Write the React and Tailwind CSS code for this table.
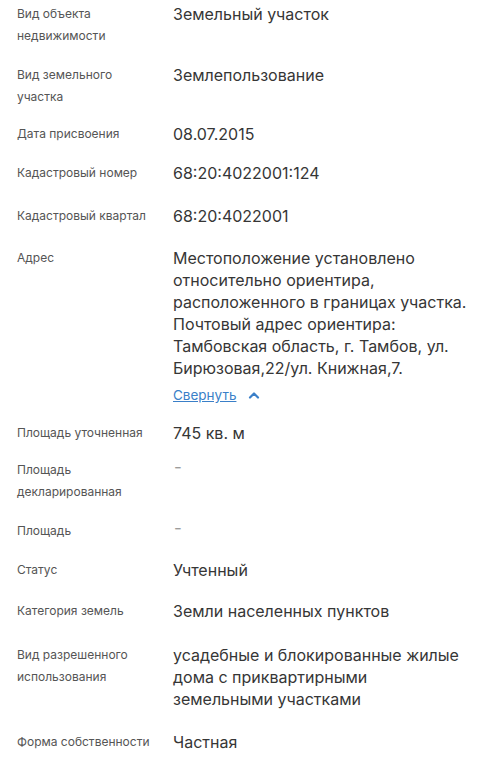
import React from 'react';

const rows = [
  { label: 'Вид объекта недвижимости', value: 'Земельный участок', pb: 'pb-[17px]' },
  { label: 'Вид земельного участка', value: 'Землепользование', pb: 'pb-[15px]' },
  { label: 'Дата присвоения', value: '08.07.2015', pb: 'pb-[17px]' },
  { label: 'Кадастровый номер', value: '68:20:4022001:124', pb: 'pb-[21px]' },
  { label: 'Кадастровый квартал', value: '68:20:4022001', pb: 'pb-[20px]' },
  { label: 'Адрес', address: true, pb: 'pb-[16px]' },
  { label: 'Площадь уточненная', value: '745 кв. м', pb: 'pb-[15px]' },
  { label: 'Площадь декларированная', dash: true, pb: 'pb-[17px]' },
  { label: 'Площадь', dash: true, pb: 'pb-[17px]' },
  { label: 'Статус', value: 'Учтенный', pb: 'pb-[19px]' },
  { label: 'Категория земель', value: 'Земли населенных пунктов', pb: 'pb-[22px]' },
  { label: 'Вид разрешенного использования', value: 'усадебные и блокированные жилые дома с приквартирными земельными участками', pb: 'pb-[21px]' },
  { label: 'Форма собственности', value: 'Частная', pb: 'pb-[17px]' },
];

function Row({ row }) {
  return (
    <div className={'flex ' + row.pb}>
      <div className="w-[156px] shrink-0 pr-4 text-[12px] leading-[22px] text-[#555555]">{row.label}</div>
      <div className="w-[298px] text-[16px] leading-[22px] text-[#363636]">
        {row.dash && (
          <span className="relative -top-[3px] pl-[1px] text-[17px] text-[#9c9c9c]">-</span>
        )}
        {row.value}
        {row.address && (
          <div>
            <div>
              Местоположение установлено относительно ориентира, расположенного в границах участка.
              Почтовый адрес ориентира: Тамбовская область, г. Тамбов, ул. Бирюзовая,22/ул. Книжная,7.
            </div>
            <div className="mt-[5px] flex items-center gap-[12px]">
              <a href="#" className="text-[13.5px] leading-[22px] text-[#3a7fc8] underline">Свернуть</a>
              <svg width="12" height="8" viewBox="0 0 12 8" fill="none">
                <path d="M2 6.5 L6 2.5 L10 6.5" stroke="#3a7fc8" strokeWidth="2.2" strokeLinecap="round" strokeLinejoin="round" />
              </svg>
            </div>
          </div>
        )}
      </div>
    </div>
  );
}

export default function App() {
  return (
    <div className="min-h-[760px] bg-white pl-[17px] pt-[3px]" style={{ fontFamily: 'Inter, "Noto Sans", sans-serif' }}>
      {rows.map((r) => (
        <Row key={r.label} row={r} />
      ))}
    </div>
  );
}
